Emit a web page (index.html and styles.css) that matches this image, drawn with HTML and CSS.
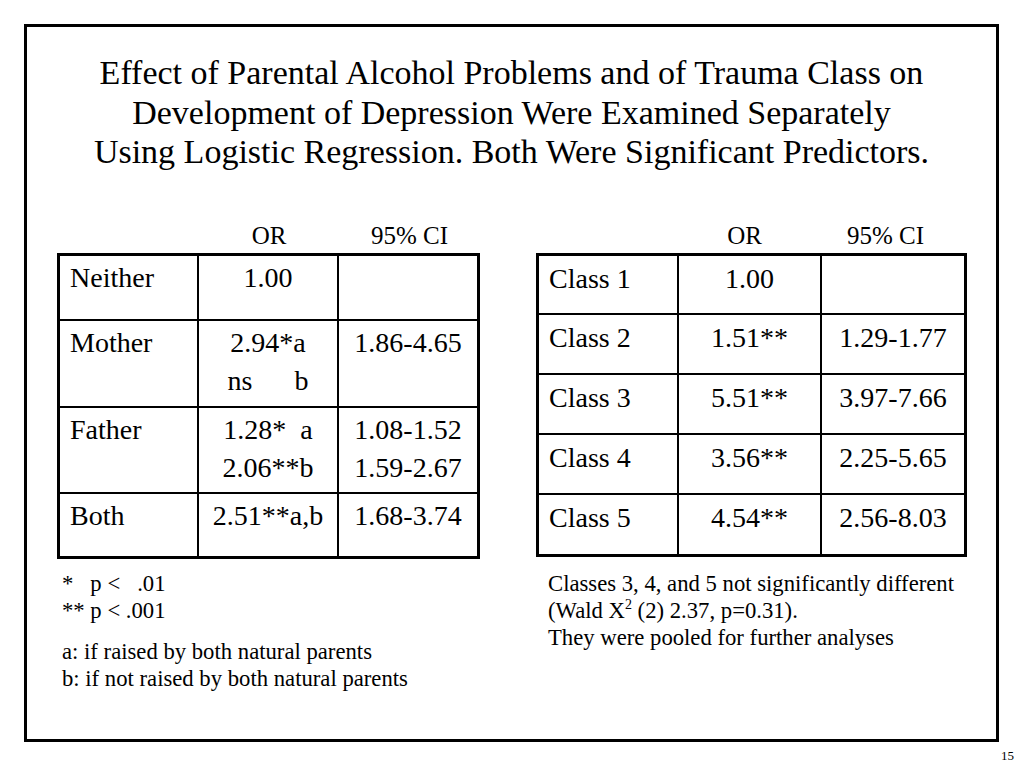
FILE: index.html
```html
<!DOCTYPE html>
<html>
<head>
<meta charset="utf-8">
<link rel="stylesheet" href="styles.css">
</head>
<body>
<div class="frame">
  <h1 class="title">Effect of Parental Alcohol Problems and of Trauma Class on<br>Development of Depression Were Examined Separately<br>Using Logistic Regression. Both Were Significant Predictors.</h1>
  <div class="panels">
    <div class="panel panel-left">
      <div class="heads heads-left"><span></span><span>OR</span><span>95% CI</span></div>
      <table class="tbl tbl-left">
        <colgroup><col class="c1"><col class="c2"><col class="c3"></colgroup>
        <tr class="r65"><td class="lab">Neither</td><td>1.00</td><td></td></tr>
        <tr class="r87"><td class="lab">Mother</td><td>2.94*a<br><span class="ns">ns&nbsp;&nbsp;&nbsp;&nbsp;&nbsp;&nbsp;b</span></td><td>1.86-4.65</td></tr>
        <tr class="r86"><td class="lab">Father</td><td>1.28*&nbsp;&nbsp;a<br>2.06**b</td><td>1.08-1.52<br>1.59-2.67</td></tr>
        <tr class="r62 last"><td class="lab">Both</td><td>2.51**a,b</td><td>1.68-3.74</td></tr>
      </table>
      <div class="notes notes-left">
        <p>*&nbsp;&nbsp;&nbsp;p&nbsp;&lt;&nbsp;&nbsp;&nbsp;.01<br>**&nbsp;p&nbsp;&lt;&nbsp;.001</p>
        <p class="gap">a: if raised by both natural parents<br>b: if not raised by both natural parents</p>
      </div>
    </div>
    <div class="panel panel-right">
      <div class="heads heads-right"><span></span><span>OR</span><span>95% CI</span></div>
      <table class="tbl tbl-right">
        <colgroup><col class="d1"><col class="d2"><col class="d3"></colgroup>
        <tr class="r59"><td class="lab">Class 1</td><td>1.00</td><td></td></tr>
        <tr class="r60"><td class="lab">Class 2</td><td>1.51**</td><td>1.29-1.77</td></tr>
        <tr class="r60"><td class="lab">Class 3</td><td>5.51**</td><td>3.97-7.66</td></tr>
        <tr class="r60"><td class="lab">Class 4</td><td>3.56**</td><td>2.25-5.65</td></tr>
        <tr class="r59 last"><td class="lab">Class 5</td><td>4.54**</td><td>2.56-8.03</td></tr>
      </table>
      <div class="notes notes-right">
        <p>Classes 3, 4, and 5 not significantly different<br>(Wald X<sup>2</sup> (2) 2.37, p=0.31).<br>They were pooled for further analyses</p>
      </div>
    </div>
  </div>
</div>
<div class="pagenum">15</div>
</body>
</html>
```
FILE: styles.css
```css
html, body {
  margin: 0;
  padding: 0;
  background: #fff;
}
body {
  font-family: "Liberation Serif", "Times New Roman", serif;
  color: #000;
  width: 1024px;
  height: 768px;
  overflow: hidden;
}
.frame {
  box-sizing: border-box;
  margin: 24px 0 0 24px;
  width: 975px;
  height: 718px;
  border: 3px solid #000;
  display: flex;
  flex-direction: column;
}
.title {
  margin: 0;
  padding-top: 26px;
  font-weight: normal;
  font-size: 34px;
  line-height: 39.5px;
  text-align: center;
}
.panels {
  display: flex;
  margin-top: 49px;
  padding-left: 30px;
  gap: 56px;
}
.panel {
  display: flex;
  flex-direction: column;
}
.heads {
  display: grid;
  font-size: 25px;
  line-height: 30px;
  height: 32px;
  text-align: center;
}
.heads-left {
  grid-template-columns: 142px 140px 141px;
}
.heads-right {
  grid-template-columns: 143px 131px 151px;
}
.tbl {
  border-collapse: separate;
  border-spacing: 0;
  border: 3px solid #000;
  table-layout: fixed;
  font-size: 28px;
  line-height: 38px;
}
.tbl-left { width: 423px; }
.tbl-right { width: 431px; }
.c1 { width: 139px; }
.c2 { width: 140px; }
.c3 { width: 138px; }
.d1 { width: 140px; }
.d2 { width: 143px; }
.d3 { width: 142px; }
.tbl td {
  box-sizing: border-box;
  padding: 4px 0 0 0;
  vertical-align: top;
  text-align: center;
  border-right: 2px solid #000;
  border-bottom: 2px solid #000;
  white-space: nowrap;
}
.tbl td:last-child { border-right: none; }
.tbl tr.last td { border-bottom: none; }
.tbl td.lab {
  text-align: left;
  padding-left: 10px;
}
.tbl-left td { padding-top: 3px; }
.r65 { height: 65px; }
.r87 { height: 87px; }
.r86 { height: 86px; }
.r62 { height: 62px; }
.r59 { height: 59px; }
.r60 { height: 60px; }
.ns { display: inline-block; }
.notes {
  font-size: 22.7px;
  line-height: 27px;
}
.notes p { margin: 0; }
.notes-left {
  padding-left: 5px;
  padding-top: 11px;
}
.notes-left .gap { margin-top: 14px; }
.notes-right {
  padding-left: 12px;
  padding-top: 13px;
}
.notes sup {
  font-size: 14px;
  line-height: 0;
  vertical-align: 9px;
}
.pagenum {
  width: 1014px;
  text-align: right;
  font-size: 13px;
  line-height: 16px;
  margin-top: 6px;
}
```
